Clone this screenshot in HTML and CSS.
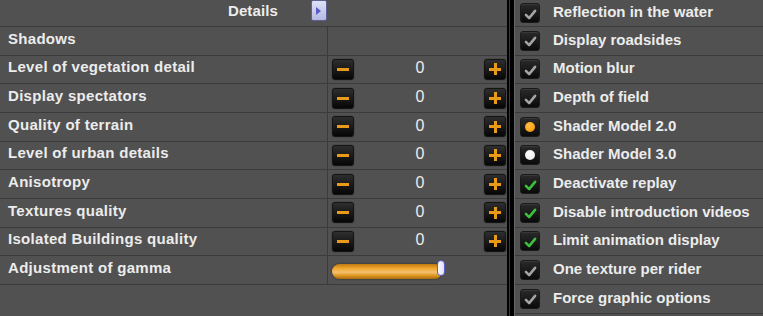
FILE: index.html
```html
<!DOCTYPE html>
<html lang="en">
<head>
  <meta charset="UTF-8" />
  <title>Graphic options</title>
  <link rel="stylesheet" href="styles.css">
</head>
<body>
  <div class="screen">
    <section class="details">
      <div class="details-head">
        <span>Details</span>
        <button class="arrow-btn"><svg width="7" height="10" viewBox="0 0 7 10"><path d="M1 1 L6 5 L1 9 Z" fill="#5a5cc4"/></svg></button>
      </div>
      <div class="row"><div class="label">Shadows</div><div class="ctrl"></div></div>
      <div class="row"><div class="label">Level of vegetation detail</div><div class="ctrl"><span class="btn minus"></span><span class="num">0</span><span class="btn plus"></span></div></div>
      <div class="row"><div class="label">Display spectators</div><div class="ctrl"><span class="btn minus"></span><span class="num">0</span><span class="btn plus"></span></div></div>
      <div class="row"><div class="label">Quality of terrain</div><div class="ctrl"><span class="btn minus"></span><span class="num">0</span><span class="btn plus"></span></div></div>
      <div class="row"><div class="label">Level of urban details</div><div class="ctrl"><span class="btn minus"></span><span class="num">0</span><span class="btn plus"></span></div></div>
      <div class="row"><div class="label">Anisotropy</div><div class="ctrl"><span class="btn minus"></span><span class="num">0</span><span class="btn plus"></span></div></div>
      <div class="row"><div class="label">Textures quality</div><div class="ctrl"><span class="btn minus"></span><span class="num">0</span><span class="btn plus"></span></div></div>
      <div class="row"><div class="label">Isolated Buildings quality</div><div class="ctrl"><span class="btn minus"></span><span class="num">0</span><span class="btn plus"></span></div></div>
      <div class="row"><div class="label">Adjustment of gamma</div><div class="ctrl"><div class="slider"><span class="knob"></span></div></div></div>
    </section>
    <div class="divider"></div>
    <section class="toggles">
      <div class="opt first"><span class="box"><svg class="tick" viewBox="0 0 14 12"><path d="M2 6.5 L5.5 10 L12 2"/></svg></span><span class="text">Reflection in the water</span></div>
      <div class="opt"><span class="box"><svg class="tick" viewBox="0 0 14 12"><path d="M2 6.5 L5.5 10 L12 2"/></svg></span><span class="text">Display roadsides</span></div>
      <div class="opt"><span class="box"><svg class="tick" viewBox="0 0 14 12"><path d="M2 6.5 L5.5 10 L12 2"/></svg></span><span class="text">Motion blur</span></div>
      <div class="opt"><span class="box"><svg class="tick" viewBox="0 0 14 12"><path d="M2 6.5 L5.5 10 L12 2"/></svg></span><span class="text">Depth of field</span></div>
      <div class="opt"><span class="box"><span class="dot orange"></span></span><span class="text">Shader Model 2.0</span></div>
      <div class="opt"><span class="box"><span class="dot white"></span></span><span class="text">Shader Model 3.0</span></div>
      <div class="opt"><span class="box"><svg class="tick on" viewBox="0 0 14 12"><path d="M2 6.5 L5.5 10 L12 2"/></svg></span><span class="text">Deactivate replay</span></div>
      <div class="opt"><span class="box"><svg class="tick on" viewBox="0 0 14 12"><path d="M2 6.5 L5.5 10 L12 2"/></svg></span><span class="text">Disable introduction videos</span></div>
      <div class="opt"><span class="box"><svg class="tick on" viewBox="0 0 14 12"><path d="M2 6.5 L5.5 10 L12 2"/></svg></span><span class="text">Limit animation display</span></div>
      <div class="opt"><span class="box"><svg class="tick" viewBox="0 0 14 12"><path d="M2 6.5 L5.5 10 L12 2"/></svg></span><span class="text">One texture per rider</span></div>
      <div class="opt"><span class="box"><svg class="tick" viewBox="0 0 14 12"><path d="M2 6.5 L5.5 10 L12 2"/></svg></span><span class="text">Force graphic options</span></div>
    </section>
  </div>
</body>
</html>
```

FILE: styles.css
```css
* { margin: 0; padding: 0; box-sizing: border-box; }
body {
  font-family: 'Liberation Sans', Arial, sans-serif;
  background: #515151; color: #ececec;
  width: 763px; height: 316px; overflow: hidden;
}
.screen { display: flex; height: 316px; }

/* left: details */
.details { width: 507px; background: #515151; }
.details-head {
  height: 27px; border-bottom: 1px solid #3b3b3b;
  display: flex; align-items: flex-start; gap: 33px;
  padding-left: 228px; padding-top: 2px;
  font-weight: bold; font-size: 15px; letter-spacing: 0.1px;
}
.arrow-btn {
  width: 16px; height: 21px; margin-top: -2px;
  border: 1px solid #5d6090; border-radius: 2px;
  background: linear-gradient(#dfe1f7, #b4b8e2);
  display: flex; align-items: center; justify-content: center;
}
.row {
  height: 28.667px; border-bottom: 1px solid #3b3b3b;
  display: flex;
}
.label {
  width: 328px; border-right: 1px solid #3b3b3b;
  padding: 0 0 5px 8px; display: flex; align-items: center;
  font-weight: bold; font-size: 15px; letter-spacing: 0.3px;
}
.ctrl {
  flex: 1; display: flex; align-items: center; justify-content: space-between;
  padding: 0 1px 0 4px;
}
.num { font-size: 16px; padding-bottom: 2px; margin-left: 2px; }
.btn {
  width: 22px; height: 21px; border-radius: 3px; position: relative;
  background: linear-gradient(#2e2e2e, #060606);
  border: 1px solid #141414; box-shadow: 0 0 1px #000;
}
.btn::before, .plus::after {
  content: ""; position: absolute; background: #e89a18;
  left: 4px; top: 8px; width: 12px; height: 3px;
}
.plus::after { left: 8.5px; top: 3.5px; width: 3px; height: 12px; }
.slider {
  width: 110px; height: 15px; margin-top: 2px; position: relative;
  border-radius: 8px;
  background: linear-gradient(#c07a10, #f0a830 30%, #f3c070 55%, #e29a22 75%, #a86a0c);
  box-shadow: 0 0 2px #222;
}
.knob {
  position: absolute; right: -3px; top: -4px; width: 8px; height: 16px;
  border-radius: 4px; background: linear-gradient(to right, #f8f8ff, #dfe2f5);
  border: 1px solid #5b5fc8;
}

/* divider */
.divider {
  width: 8px;
  background: linear-gradient(to right, #000 0 2px, #3a3a3a 2px 3px, #000 3px 7px, #666 7px 8px);
}

/* right: toggles */
.toggles { flex: 1; background: #515151; }
.opt {
  height: 28.667px; border-bottom: 1px solid #3b3b3b;
  display: flex; align-items: center; padding-left: 5px; gap: 13px;
}
.opt.first { height: 27px; }
.text { font-weight: bold; font-size: 15px; padding-bottom: 3px; }
.box {
  width: 20px; height: 20px; flex: none; border-radius: 3px;
  background: linear-gradient(#2a2a2a, #0a0a0a);
  border: 1px solid #1a1a1a; box-shadow: inset 0 1px 0 #383838;
  display: flex; align-items: center; justify-content: center;
}
.tick { width: 13px; height: 11px; margin-top: 2px; }
.tick path { fill: none; stroke: #a4a4a4; stroke-width: 2.8; stroke-linecap: round; stroke-linejoin: round; }
.tick.on path { stroke: #3cc03c; }
.dot { width: 10px; height: 10px; border-radius: 50%; }
.dot.orange { background: radial-gradient(circle at 40% 35%, #ffc040, #f09000); }
.dot.white { background: radial-gradient(circle at 40% 35%, #fff, #e6e6e6); }
```
